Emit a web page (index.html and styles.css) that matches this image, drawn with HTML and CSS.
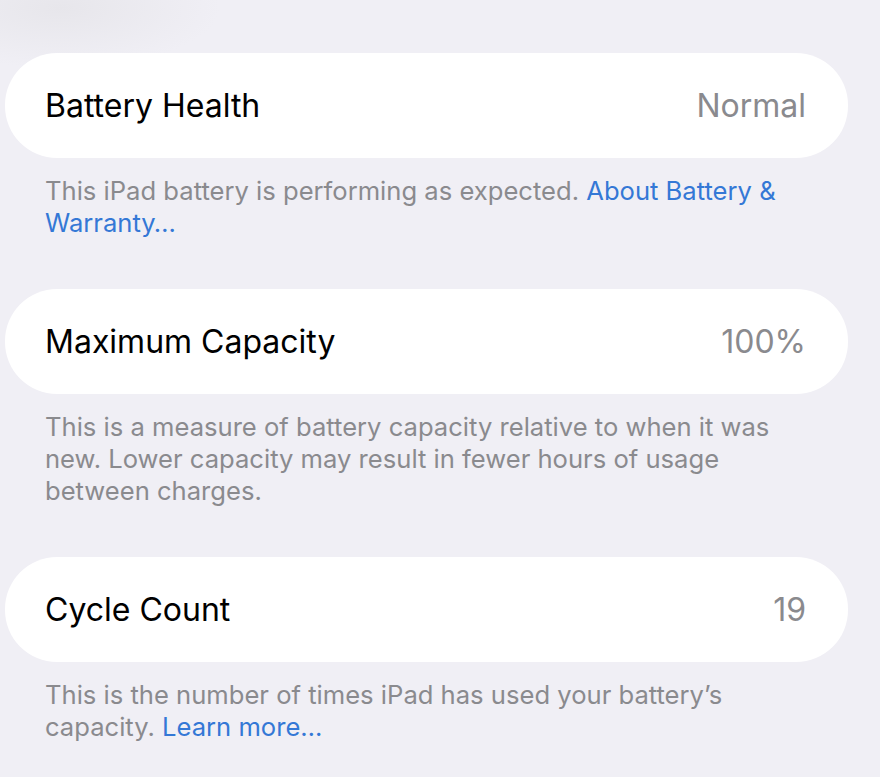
FILE: index.html
```html
<!DOCTYPE html>
<html lang="en">
<head>
  <meta charset="UTF-8">
  <meta name="viewport" content="width=device-width, initial-scale=1.0">
  <title>Battery Health</title>
  <link rel="stylesheet" href="styles.css">
</head>
<body>
  <div class="page">
    <div class="group">
      <div class="row">
        <span class="label">Battery Health</span>
        <span class="value">Normal</span>
      </div>
      <p class="note">This iPad battery is performing as expected. <a href="#">About Battery &amp; Warranty…</a></p>
    </div>
    <div class="group">
      <div class="row">
        <span class="label">Maximum Capacity</span>
        <span class="value">100%</span>
      </div>
      <p class="note">This is a measure of battery capacity relative to when it was new. Lower capacity may result in fewer hours of usage between charges.</p>
    </div>
    <div class="group">
      <div class="row">
        <span class="label">Cycle Count</span>
        <span class="value">19</span>
      </div>
      <p class="note">This is the number of times iPad has used your battery’s capacity. <a href="#">Learn more…</a></p>
    </div>
  </div>
</body>
</html>
```

FILE: styles.css
```css
* {
  box-sizing: border-box;
  margin: 0;
  padding: 0;
}
body {
  background: radial-gradient(ellipse 160px 60px at 60px 8px, #e7e6eb, rgba(240, 239, 245, 0)), #f0eff5;
  font-family: 'Inter', 'Liberation Sans', sans-serif;
  color: #000;
}
.page {
  padding: 53px 32px 0 5px;
}
.group {
  margin-bottom: 50px;
}
.row {
  display: flex;
  justify-content: space-between;
  align-items: center;
  height: 105px;
  padding: 0 42px 0 40px;
  background: #fff;
  border-radius: 52px;
  font-size: 32px;
}
.value {
  color: #8a8a8e;
}
.note {
  padding: 17px 52px 0 40px;
  font-size: 25.6px;
  line-height: 32px;
  color: #8a8a8e;
}
.note a {
  color: #3478d6;
  text-decoration: none;
}
```
